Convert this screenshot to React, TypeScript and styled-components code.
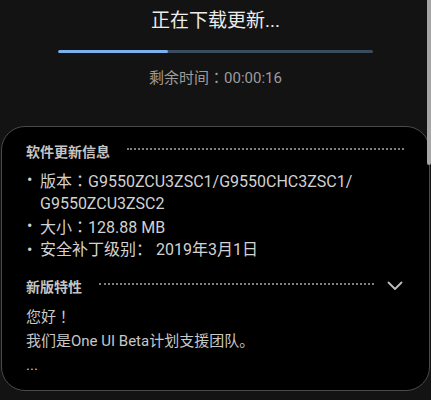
import React from "react";
import styled, { createGlobalStyle } from "styled-components";

const Global = createGlobalStyle`
  html, body { margin: 0; padding: 0; background: #131313; }
  body { font-family: Roboto, "Noto Sans CJK SC", sans-serif; -webkit-font-smoothing: antialiased; }
`;

const Page = styled.div`
  width: 431px;
  height: 400px;
  background: #131313;
  display: flex;
  flex-direction: column;
  overflow: hidden;
  position: relative;
`;

const Header = styled.div`
  display: flex;
  flex-direction: column;
  align-items: center;
  padding-top: 8px;
`;

const Title = styled.div`
  font-size: 19px;
  line-height: 26px;
  color: #ececec;
`;

const Track = styled.div`
  margin-top: 16px;
  width: 315px;
  height: 3px;
  border-radius: 2px;
  background: #3a4c60;
  overflow: hidden;
`;

const Fill = styled.div`
  height: 100%;
  background: #7ab0ec;
  border-radius: 2px;
`;

const Remaining = styled.div`
  margin-top: 14px;
  font-size: 15px;
  line-height: 20px;
  color: #9c9c9c;
`;

const Punct = styled.span`
  font-family: "Noto Sans CJK TC", sans-serif;
`;

const Card = styled.div`
  margin: 38px 0 0 1px;
  width: 429px;
  box-sizing: border-box;
  background: #000;
  border: 1px solid #4a4a4a;
  border-radius: 24px;
  padding: 14px 25px 13px 24px;
  display: flex;
  flex-direction: column;
`;

const SectionHead = styled.div<{ $gap?: number }>`
  display: flex;
  align-items: center;
  height: 20px;
  margin-top: ${(p) => p.$gap ?? 0}px;
`;

const HeadText = styled.span`
  font-size: 14px;
  font-weight: 700;
  color: #c4c4c4;
  white-space: nowrap;
`;

const Dots = styled.span<{ $right?: number }>`
  flex: 1;
  margin: 0 ${(p) => p.$right ?? 0}px 0 17px;
  border-top: 2px dotted #808080;
  height: 0;
  transform: translateY(-2px);
`;

const Chevron = styled.svg`
  width: 16px;
  height: 10px;
  flex: none;
  margin-right: 1px;
`;

const List = styled.ul`
  list-style: none;
  margin: 8px 0 0;
  padding: 0;
`;

const Item = styled.li`
  display: flex;
  font-size: 16px;
  line-height: 22px;
  color: #d2d2d2;
`;

const Bullet = styled.span`
  width: 13px;
  flex: none;
  padding-left: 1px;
`;

const Body = styled.div`
  margin-top: 8px;
  font-size: 15px;
  line-height: 24px;
  color: #c8c8c8;
`;

const ScrollThumb = styled.div`
  position: absolute;
  top: 0;
  right: 0;
  width: 4px;
  height: 165px;
  background: #a6a6a6;
  border-radius: 0 0 2px 2px;
`;

export default function App() {
  const progress = 35;
  return (
    <Page>
      <Global />
      <Header>
        <Title>正在下载更新...</Title>
        <Track>
          <Fill style={{ width: `${progress}%` }} />
        </Track>
        <Remaining>
          剩余时间<Punct>：</Punct>00:00:16
        </Remaining>
      </Header>
      <Card>
        <SectionHead>
          <HeadText>软件更新信息</HeadText>
          <Dots />
        </SectionHead>
        <List>
          <Item>
            <Bullet>•</Bullet>
            <span>
              版本<Punct>：</Punct>G9550ZCU3ZSC1/G9550CHC3ZSC1/
              <br />
              G9550ZCU3ZSC2
            </span>
          </Item>
          <Item>
            <Bullet>•</Bullet>
            <span>
              大小<Punct>：</Punct>128.88 MB
            </span>
          </Item>
          <Item>
            <Bullet>•</Bullet>
            <span>安全补丁级别： 2019年3月1日</span>
          </Item>
        </List>
        <SectionHead $gap={15}>
          <HeadText>新版特性</HeadText>
          <Dots $right={13} />
          <Chevron viewBox="0 0 16 10">
            <polyline points="1.5,1.5 8,8 14.5,1.5" fill="none" stroke="#bdbdbd" strokeWidth="1.8" strokeLinecap="round" strokeLinejoin="round" />
          </Chevron>
        </SectionHead>
        <Body>
          您好<Punct>！</Punct>
          <br />
          我们是One UI Beta计划支援团队。
          <br />
          ...
        </Body>
      </Card>
      <ScrollThumb />
    </Page>
  );
}
